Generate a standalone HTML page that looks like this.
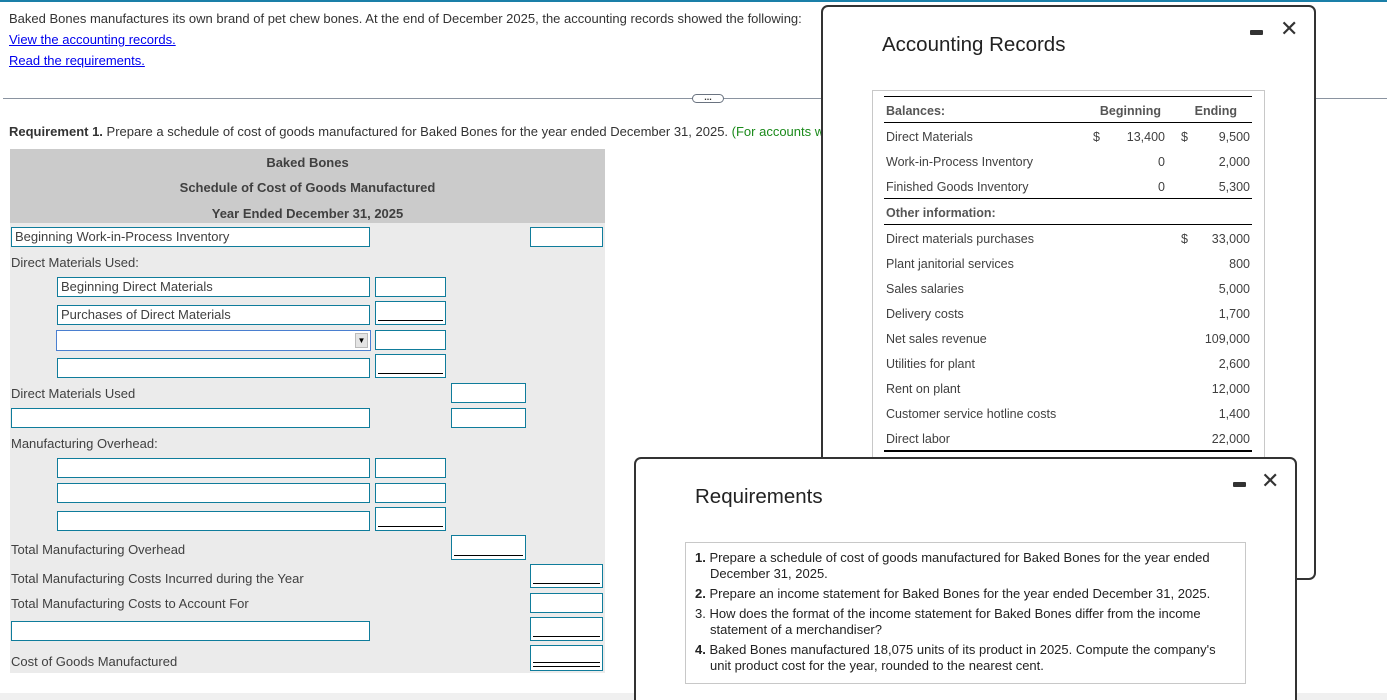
<!DOCTYPE html>
<html><head><meta charset="utf-8"><style>
*{margin:0;padding:0;box-sizing:border-box}
html,body{width:1387px;height:700px;overflow:hidden}
body{position:relative;background:#fff;font-family:"Liberation Sans",Arial,sans-serif;font-size:13px;color:#333}
.a{position:absolute;white-space:nowrap;line-height:16px}
.i{position:absolute;background:#fff;border:1px solid #0f7c9b;font-size:13px;line-height:17px;padding-left:3px;color:#404040}
.u::after{content:"";position:absolute;left:2px;right:2px;bottom:3px;border-top:1px solid #000}
.d::after{content:"";position:absolute;left:2px;right:2px;bottom:3px;height:3px;border-top:1px solid #000;border-bottom:1px solid #000}
.g{color:#404040}
.m{font-size:12.5px}
.modal{position:absolute;background:#fff;border:2px solid #333;border-radius:7px}
.t{position:absolute;left:884px;width:368px;border-top:1px solid #000}
.r{text-align:right}
</style></head><body>
<div style="position:absolute;left:0;top:0;width:1387px;height:2px;background:#1a7fa8"></div>
<div class="a" style="left:9px;top:11px">Baked Bones manufactures its own brand of pet chew bones. At the end of December 2025, the accounting records showed the following:</div>
<div class="a" style="left:9px;top:32px;color:#00e;text-decoration:underline">View the accounting records.</div>
<div class="a" style="left:9px;top:53px;color:#00e;text-decoration:underline">Read the requirements.</div>
<div style="position:absolute;left:3px;top:98px;width:1384px;border-top:1px solid #8a93a0"></div>
<div style="position:absolute;left:692px;top:94px;width:32px;height:9px;border:1px solid #6a7380;border-radius:5px;background:#fff;font-size:9px;line-height:5px;text-align:center;color:#333;font-weight:bold">...</div>
<div class="a" style="left:9px;top:124px"><b>Requirement 1.</b> Prepare a schedule of cost of goods manufactured for Baked Bones for the year ended December 31, 2025. <span style="color:#1a8a1a">(For accounts w</span></div>

<div style="position:absolute;left:10px;top:149px;width:595px;height:74px;background:#cbcbcb"></div>
<div style="position:absolute;left:10px;top:223px;width:595px;height:450px;background:#ebebeb"></div>
<div class="a g" style="left:10px;width:595px;text-align:center;top:155px;font-weight:bold">Baked Bones</div>
<div class="a g" style="left:10px;width:595px;text-align:center;top:180px;font-weight:bold">Schedule of Cost of Goods Manufactured</div>
<div class="a g" style="left:10px;width:595px;text-align:center;top:206px;font-weight:bold">Year Ended December 31, 2025</div>

<div class="i" style="left:11px;top:227px;width:359px;height:20px">Beginning Work-in-Process Inventory</div>
<div class="i" style="left:530px;top:227px;width:73px;height:20px"></div>
<div class="a g" style="left:11px;top:255px">Direct Materials Used:</div>
<div class="i" style="left:57px;top:277px;width:313px;height:20px">Beginning Direct Materials</div>
<div class="i" style="left:375px;top:277px;width:71px;height:20px"></div>
<div class="i" style="left:57px;top:305px;width:313px;height:20px">Purchases of Direct Materials</div>
<div class="i u" style="left:375px;top:301px;width:71px;height:24px"></div>
<div class="i" style="left:56px;top:330px;width:315px;height:21px;border:1px solid #4a7fd0"><span style="position:absolute;right:2px;top:2px;width:13px;height:15px;background:#e4e4e4;border:1px solid #bbb;font-size:8px;line-height:13px;text-align:center;color:#000">▼</span></div>
<div class="i" style="left:375px;top:330px;width:71px;height:20px"></div>
<div class="i" style="left:57px;top:358px;width:313px;height:20px"></div>
<div class="i u" style="left:375px;top:354px;width:71px;height:24px"></div>
<div class="a g" style="left:11px;top:386px">Direct Materials Used</div>
<div class="i" style="left:451px;top:383px;width:75px;height:20px"></div>
<div class="i" style="left:11px;top:408px;width:359px;height:20px"></div>
<div class="i" style="left:451px;top:408px;width:75px;height:20px"></div>
<div class="a g" style="left:11px;top:436px">Manufacturing Overhead:</div>
<div class="i" style="left:57px;top:458px;width:313px;height:20px"></div>
<div class="i" style="left:375px;top:458px;width:71px;height:20px"></div>
<div class="i" style="left:57px;top:483px;width:313px;height:20px"></div>
<div class="i" style="left:375px;top:483px;width:71px;height:20px"></div>
<div class="i" style="left:57px;top:511px;width:313px;height:20px"></div>
<div class="i u" style="left:375px;top:507px;width:71px;height:24px"></div>
<div class="a g" style="left:11px;top:542px">Total Manufacturing Overhead</div>
<div class="i u" style="left:451px;top:535px;width:75px;height:25px"></div>
<div class="a g" style="left:11px;top:571px">Total Manufacturing Costs Incurred during the Year</div>
<div class="i u" style="left:530px;top:564px;width:73px;height:24px"></div>
<div class="a g" style="left:11px;top:596px">Total Manufacturing Costs to Account For</div>
<div class="i" style="left:530px;top:593px;width:73px;height:20px"></div>
<div class="i" style="left:11px;top:621px;width:359px;height:20px"></div>
<div class="i u" style="left:530px;top:617px;width:73px;height:24px"></div>
<div class="a g" style="left:11px;top:654px">Cost of Goods Manufactured</div>
<div class="i d" style="left:530px;top:645px;width:73px;height:26px"></div>
<div style="position:absolute;left:0;top:693px;width:1387px;height:7px;background:#f0f0f0"></div>

<div class="modal" style="left:821px;top:5px;width:495px;height:575px"></div>
<div class="a" style="left:882px;top:33px;font-size:20.5px;line-height:24px;color:#222">Accounting Records</div>
<div class="a" style="left:1250px;top:30px;width:13px;height:5px;background:#333;border-radius:1px"></div>
<div class="a" style="left:1280px;top:16px;font-size:22px;line-height:26px;color:#333">✕</div>
<div style="position:absolute;left:872px;top:90px;width:393px;height:370px;border:1px solid #c8c8c8"></div>
<div class="t" style="top:96px"></div>
<div class="t" style="top:122px"></div>
<div class="t" style="top:198px"></div>
<div class="t" style="top:224px"></div>
<div class="t" style="top:450px;border-top-width:2px"></div>
<div class="a m" style="left:886px;top:103px;font-weight:bold;color:#555">Balances:</div>
<div class="a m r" style="left:1080px;width:81px;top:103px;font-weight:bold;color:#555">Beginning</div>
<div class="a m r" style="left:1180px;width:57px;top:103px;font-weight:bold;color:#555">Ending</div>
<div class="a m g" style="left:886px;top:129px">Direct Materials</div>
<div class="a m g" style="left:1093px;top:129px">$</div><div class="a m g r" style="left:1100px;width:65px;top:129px">13,400</div>
<div class="a m g" style="left:1181px;top:129px">$</div><div class="a m g r" style="left:1190px;width:60px;top:129px">9,500</div>
<div class="a m g" style="left:886px;top:154px">Work-in-Process Inventory</div>
<div class="a m g r" style="left:1100px;width:65px;top:154px">0</div><div class="a m g r" style="left:1190px;width:60px;top:154px">2,000</div>
<div class="a m g" style="left:886px;top:179px">Finished Goods Inventory</div>
<div class="a m g r" style="left:1100px;width:65px;top:179px">0</div><div class="a m g r" style="left:1190px;width:60px;top:179px">5,300</div>
<div class="a m" style="left:886px;top:205px;font-weight:bold;color:#555">Other information:</div>
<div class="a m g" style="left:886px;top:231px">Direct materials purchases</div><div class="a m g" style="left:1181px;top:231px">$</div><div class="a m g r" style="left:1190px;width:60px;top:231px">33,000</div>
<div class="a m g" style="left:886px;top:256px">Plant janitorial services</div><div class="a m g r" style="left:1190px;width:60px;top:256px">800</div>
<div class="a m g" style="left:886px;top:281px">Sales salaries</div><div class="a m g r" style="left:1190px;width:60px;top:281px">5,000</div>
<div class="a m g" style="left:886px;top:306px">Delivery costs</div><div class="a m g r" style="left:1190px;width:60px;top:306px">1,700</div>
<div class="a m g" style="left:886px;top:331px">Net sales revenue</div><div class="a m g r" style="left:1190px;width:60px;top:331px">109,000</div>
<div class="a m g" style="left:886px;top:356px">Utilities for plant</div><div class="a m g r" style="left:1190px;width:60px;top:356px">2,600</div>
<div class="a m g" style="left:886px;top:381px">Rent on plant</div><div class="a m g r" style="left:1190px;width:60px;top:381px">12,000</div>
<div class="a m g" style="left:886px;top:406px">Customer service hotline costs</div><div class="a m g r" style="left:1190px;width:60px;top:406px">1,400</div>
<div class="a m g" style="left:886px;top:431px">Direct labor</div><div class="a m g r" style="left:1190px;width:60px;top:431px">22,000</div>

<div class="modal" style="left:634px;top:457px;width:663px;height:250px"></div>
<div class="a" style="left:695px;top:485px;font-size:20.5px;line-height:24px;color:#222">Requirements</div>
<div class="a" style="left:1233px;top:482px;width:13px;height:5px;background:#333;border-radius:1px"></div>
<div class="a" style="left:1261px;top:468px;font-size:22px;line-height:26px;color:#333">✕</div>
<div style="position:absolute;left:685px;top:542px;width:561px;height:142px;border:1px solid #c8c8c8"></div>
<div class="a" style="left:695px;top:550px;line-height:16px;color:#222"><b>1.</b> Prepare a schedule of cost of goods manufactured for Baked Bones for the year ended<br><span style="padding-left:15px">December 31, 2025.</span></div>
<div class="a" style="left:695px;top:586px;color:#222"><b>2.</b> Prepare an income statement for Baked Bones for the year ended December 31, 2025.</div>
<div class="a" style="left:695px;top:606px;color:#222">3. How does the format of the income statement for Baked Bones differ from the income<br><span style="padding-left:15px">statement of a merchandiser?</span></div>
<div class="a" style="left:695px;top:642px;color:#222"><b>4.</b> Baked Bones manufactured 18,075 units of its product in 2025. Compute the company's<br><span style="padding-left:15px">unit product cost for the year, rounded to the nearest cent.</span></div>
</body></html>
